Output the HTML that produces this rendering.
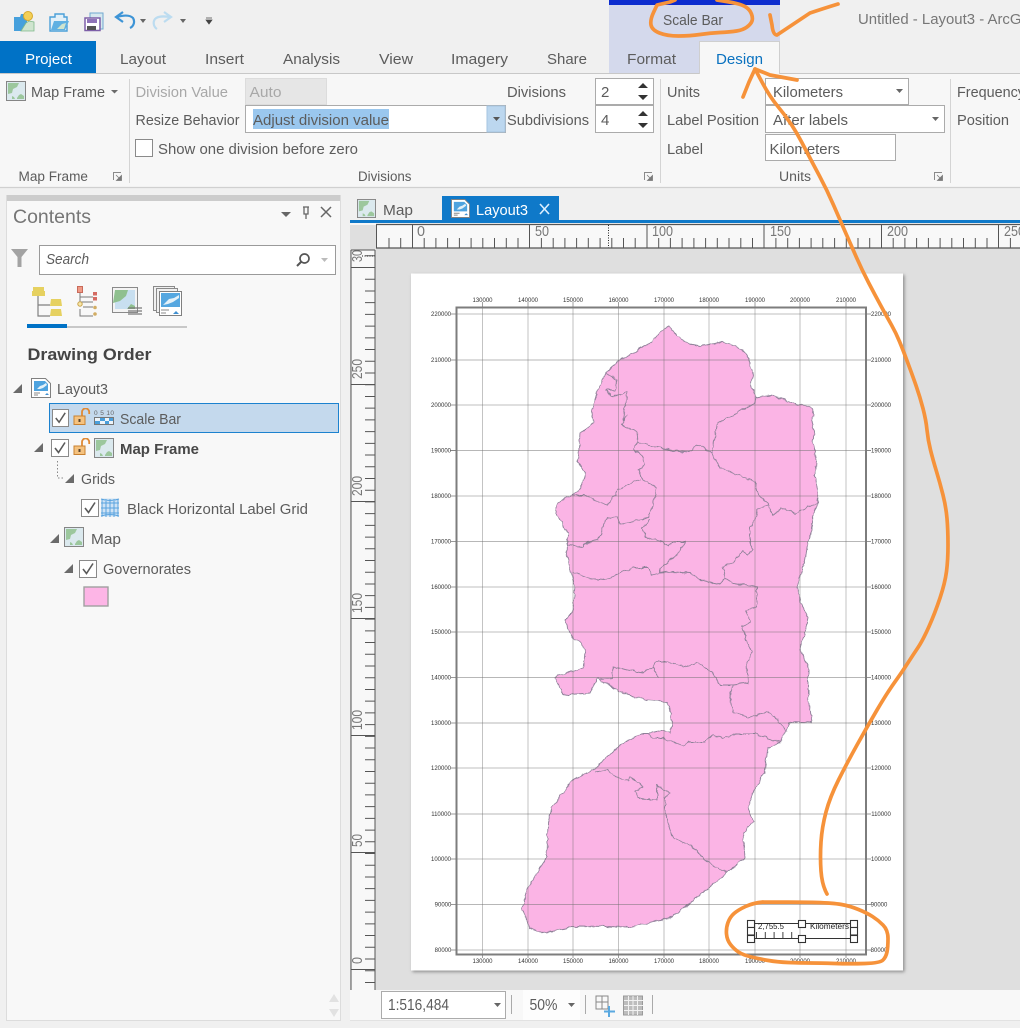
<!DOCTYPE html>
<html lang="en"><head><meta charset="utf-8"><title>Untitled - Layout3 - ArcGIS Pro</title>
<style>
html,body{margin:0;padding:0;background:#f0f0f0;overflow:hidden}
svg{display:block;filter:blur(.3px)}
text{font-family:"Liberation Sans",sans-serif;font-size:15px;fill:#5c5c5c}
.d{fill:#a8a8a8}
.g{font-size:13.5px}
.t{font-size:6px;fill:#333;text-anchor:middle}
.r{font-size:14.5px;fill:#777}
.box{fill:#fff;stroke:#ababab;stroke-width:1}
.sep{stroke:#d4d4d4;stroke-width:1}
.chk{fill:#fff;stroke:#8a8a8a;stroke-width:1}
.tick{fill:none;stroke:#555;stroke-width:1.6}
.o{fill:none;stroke:#f6923a;stroke-width:3.7;stroke-linecap:round;stroke-linejoin:round}
.tri{fill:#6b6b6b}
</style></head><body>
<svg xmlns="http://www.w3.org/2000/svg" width="1020" height="1028" viewBox="0 0 1020 1028">
<defs>
<symbol id="mapi" viewBox="0 0 20 20"><rect x=".5" y=".5" width="19" height="19" fill="#dbe9ee" stroke="#858585"/><path d="M2 2h11l-2 4-4 2-1 4-4 1z" fill="#9cc79d"/><path d="M11 17l2-3 2-1 3 2v3h-7zM6 18v-3l2 1 1 2z" fill="#9cc79d"/></symbol>
<symbol id="layi" viewBox="0 0 20 20"><path d="M.5.5h14l5 5v14H.5z" fill="#fff" stroke="#808080"/><path d="M3 3h11l3 3v7H3z" fill="#4ea3df"/><path d="M6 11l3-3 3-1 3-2 1 2-4 3-3 1z" fill="#e4f1f8"/><path d="M3 15h6M3 17h4" stroke="#888" stroke-width="1"/><path d="M14 17l2-2 2 2z" fill="#3f8fd0"/></symbol>
<symbol id="lock" viewBox="0 0 18 18"><path d="M9 8V4a3.6 3.6 0 0 1 7.200 0v2" fill="none" stroke="#e08a35" stroke-width="1.800"/><rect x="1" y="8" width="11" height="8.500" fill="#f5c27f" stroke="#c9812f"/><rect x="5.500" y="11" width="2" height="3" fill="#5b4630"/></symbol>
<symbol id="chkm" viewBox="0 0 18 18"><path d="M4 9l3.500 4.500L14 3.500" fill="none" stroke="#5a5a5a" stroke-width="1.600"/></symbol>
<symbol id="lnc" viewBox="0 0 9 9"><path d="M.5 8V.5H8" fill="none" stroke="#8a8a8a"/><path d="M3 3l3 3M8.500 3.500v5h-5z" fill="#7a7a7a" stroke="#7a7a7a" stroke-width=".8"/></symbol>
<filter id="sh" x="-5%" y="-5%" width="110%" height="110%"><feDropShadow dx="1.500" dy="1.500" stdDeviation="1.500" flood-color="#777" flood-opacity=".8"/></filter>
<filter id="wig" x="-3%" y="-3%" width="106%" height="106%"><feTurbulence type="fractalNoise" baseFrequency=".16" numOctaves="2" seed="4"/><feDisplacementMap in="SourceGraphic" scale="4" xChannelSelector="R" yChannelSelector="G"/></filter>
</defs>

<rect width="1020" height="1028" fill="#f0f0f0"/>

<!-- Title / quick access -->
<rect x="609" y="0" width="171" height="73" fill="#d4d9ec"/>
<rect x="609" y="0" width="171" height="5" fill="#0c2ccf"/>
<g>
<path d="M14 17h6l1-3h6v17H14z" fill="#46a0dc"/><path d="M21 31l5-8 3-2 5 1v9z" fill="#cfe4cf" stroke="#7fb98a" stroke-width=".8"/><circle cx="28" cy="16" r="4.500" fill="#f3cf57" stroke="#d7a92c"/>
<path d="M50 17h5v-3h9v3h3v14H50z" fill="#e3f0f8" stroke="#4a9fd8" stroke-width="1.400"/><path d="M51 30l3-9h15l-4 9z" fill="#5fb0e2"/><path d="M57 29l5-5 4-1-2 6z" fill="#cfe4cf"/>
<path d="M90 17V13h13v16h-6z" fill="#d6e8ef" stroke="#6fa9cf" stroke-width="1"/><path d="M85 18h15v12.500H85z" fill="#fff" stroke="#7d5fa8" stroke-width="1.500"/><rect x="87" y="19" width="10" height="4" fill="#8f74b8"/><rect x="87" y="26" width="9" height="4" fill="#555"/>
<path d="M130 28a7 7 0 0 0 3-10c-3-3-9-3-16-1" fill="none" stroke="#3d94d6" stroke-width="2.200"/><path d="M123 12l-7 5 7 5" fill="none" stroke="#3d94d6" stroke-width="2.200"/>
<path d="M157 29a7 7 0 0 1-2-10c3-3 8-3 15-2" fill="none" stroke="#bcdcf0" stroke-width="2.200"/><path d="M164 12l7 5-7 5" fill="none" stroke="#bcdcf0" stroke-width="2.200"/>
<path d="M140 19h6l-3 4zM180 19h6l-3 4z" fill="#666"/><path d="M206 18h6M206 20h6l-3 4z" fill="#444" stroke="#444" stroke-width=".7"/>
</g>
<text x="858" y="24" textLength="205" lengthAdjust="spacingAndGlyphs" style="font-size:14.500px;fill:#777">Untitled - Layout3 - ArcGIS Pro</text>
<text x="663" y="25" textLength="60" lengthAdjust="spacingAndGlyphs" fill="#666">Scale Bar</text>

<!-- Ribbon -->
<rect x="0" y="73" width="1020" height="114" fill="#f7f7f7"/>
<path d="M0 73.500H1020" stroke="#c8c8c8"/>
<path d="M0 187.500H1020" stroke="#d0d0d0" stroke-width="1.200"/>
<rect x="0" y="41" width="96" height="32" fill="#0072c6"/>
<path d="M699.500 74V41.500H779.500V74" fill="#f7f7f7" stroke="#cfcfcf"/>
<rect x="700" y="72" width="79" height="3" fill="#f7f7f7"/>
<text x="25" y="64" textLength="47" lengthAdjust="spacingAndGlyphs" style="fill:#fff">Project</text>
<text x="120" y="64" textLength="46" lengthAdjust="spacingAndGlyphs">Layout</text>
<text x="205" y="64" textLength="39" lengthAdjust="spacingAndGlyphs">Insert</text>
<text x="283" y="64" textLength="57" lengthAdjust="spacingAndGlyphs">Analysis</text>
<text x="379" y="64" textLength="34" lengthAdjust="spacingAndGlyphs">View</text>
<text x="451" y="64" textLength="57" lengthAdjust="spacingAndGlyphs">Imagery</text>
<text x="547" y="64" textLength="40" lengthAdjust="spacingAndGlyphs">Share</text>
<text x="627" y="64" textLength="49" lengthAdjust="spacingAndGlyphs">Format</text>
<text x="716" y="64" textLength="47" lengthAdjust="spacingAndGlyphs" style="fill:#0a72c0">Design</text>

<use href="#mapi" x="6" y="81" width="20" height="20"/>
<text x="31" y="97" textLength="74" lengthAdjust="spacingAndGlyphs">Map Frame</text>
<path d="M111 90h7l-3.500 3.500z" class="tri"/>
<path d="M129.500 79V183M660.500 79V183M950.500 79V183" class="sep"/>
<text x="135.500" y="97" textLength="92.500" lengthAdjust="spacingAndGlyphs" class="d">Division Value</text>
<rect x="245.500" y="78.500" width="81" height="26" fill="#e6e6e6" stroke="#dcdcdc"/>
<text x="249.500" y="97" textLength="32" lengthAdjust="spacingAndGlyphs" class="d">Auto</text>
<text x="135.500" y="125" textLength="104" lengthAdjust="spacingAndGlyphs">Resize Behavior</text>
<rect x="245.500" y="105.500" width="260" height="27" class="box"/>
<rect x="253" y="109" width="136" height="20" fill="#9ac7ee"/>
<rect x="487" y="106" width="18" height="26" fill="#bcd7ef" stroke="#a6c4e0"/>
<path d="M493 117h7l-3.500 4z" fill="#555"/>
<text x="253" y="125" textLength="136" lengthAdjust="spacingAndGlyphs" fill="#444">Adjust division value</text>
<rect x="135.500" y="139.500" width="17" height="17" class="chk"/>
<text x="158" y="154" textLength="200" lengthAdjust="spacingAndGlyphs">Show one division before zero</text>
<text x="18.500" y="181" textLength="69.500" lengthAdjust="spacingAndGlyphs" class="g">Map Frame</text>
<use href="#lnc" x="113" y="172" width="9" height="9"/>
<text x="358" y="181" textLength="53.500" lengthAdjust="spacingAndGlyphs" class="g">Divisions</text>
<text x="507" y="97" textLength="59" lengthAdjust="spacingAndGlyphs">Divisions</text>
<text x="507" y="125" textLength="82" lengthAdjust="spacingAndGlyphs">Subdivisions</text>
<rect x="595.500" y="78.500" width="58" height="26" class="box"/>
<rect x="595.500" y="105.500" width="58" height="27" class="box"/>
<text x="601" y="97">2</text><text x="601" y="125">4</text>
<path d="M638 88l5-5 5 5zM638 95h10l-5 5zM638 116l5-5 5 5zM638 123h10l-5 5z" fill="#333"/>
<use href="#lnc" x="644" y="172" width="9" height="9"/>
<text x="667" y="97" textLength="33" lengthAdjust="spacingAndGlyphs">Units</text>
<text x="667" y="125" textLength="92" lengthAdjust="spacingAndGlyphs">Label Position</text>
<text x="667" y="154" textLength="36" lengthAdjust="spacingAndGlyphs">Label</text>
<rect x="765.500" y="78.500" width="143" height="26" class="box"/>
<rect x="765.500" y="105.500" width="179" height="27" class="box"/>
<rect x="765.500" y="134.500" width="130" height="26" class="box"/>
<text x="773" y="97" textLength="70" lengthAdjust="spacingAndGlyphs">Kilometers</text>
<text x="773" y="125" textLength="75" lengthAdjust="spacingAndGlyphs">After labels</text>
<text x="769.500" y="154" textLength="70.500" lengthAdjust="spacingAndGlyphs">Kilometers</text>
<path d="M896 89h7l-3.500 4zM932 117h7l-3.500 4z" fill="#666"/>
<text x="779" y="181" textLength="32" lengthAdjust="spacingAndGlyphs" class="g">Units</text>
<use href="#lnc" x="934" y="172" width="9" height="9"/>
<text x="957" y="97" textLength="68" lengthAdjust="spacingAndGlyphs">Frequency</text>
<text x="957" y="125" textLength="52" lengthAdjust="spacingAndGlyphs">Position</text>

<!-- Contents pane -->
<rect x="6.500" y="195.500" width="334" height="825" fill="#f8f8f8" stroke="#dcdcdc"/>
<rect x="7" y="195" width="333" height="6" fill="#cccccc"/>
<text x="13" y="223" textLength="78" lengthAdjust="spacingAndGlyphs" style="font-size:19.500px;fill:#767676">Contents</text>
<path d="M281 212h10l-5 5z" fill="#666"/>
<path d="M303 207h6M304 207v7h4v-7M306 214v5" fill="none" stroke="#666" stroke-width="1.300"/>
<path d="M321 207l10 10M331 207l-10 10" stroke="#666" stroke-width="1.500"/>
<path d="M11 249h17l-6.500 8v10h-4v-10z" fill="#a3a3a3"/>
<rect x="39.500" y="245.500" width="296" height="29" class="box" style="stroke:#9a9a9a"/>
<text x="46" y="264" textLength="43" lengthAdjust="spacingAndGlyphs" style="font-style:italic;font-size:14.500px">Search</text>
<circle cx="304.500" cy="258.500" r="4.500" fill="none" stroke="#555" stroke-width="1.700"/><path d="M301 262l-4 4" stroke="#555" stroke-width="2"/>
<path d="M321 258h7l-3.500 4z" fill="#bbb"/>
<g>
<path d="M33 287h11v4h1v5H32v-5h1z" fill="#e6d160"/><path d="M38 296v20h12M38 305h12" fill="none" stroke="#808080" stroke-width="1.200"/>
<path d="M51 299h10l1 7H50zM51 309h10l1 7H50z" fill="#e6d160"/>
<rect x="77.500" y="286.500" width="5" height="6" fill="#ef9a86" stroke="#c86a5a"/><path d="M80 293v9h13M80 297h13M80 309v7h13M83 307h10" fill="none" stroke="#7a7a7a"/>
<rect x="93" y="292" width="4" height="3.500" fill="#d56b63"/><rect x="93" y="297" width="4" height="3.500" fill="#d56b63"/><circle cx="95" cy="307.500" r="1.800" fill="#d2ad64"/><circle cx="95" cy="314" r="1.800" fill="#d2ad64"/><circle cx="80" cy="304" r="2.200" fill="#f8e7a8" stroke="#c8a34c"/>
<rect x="112.500" y="287.500" width="25" height="25" fill="#f4f4f4" stroke="#8a8a8a"/><rect x="115" y="290" width="20" height="19" fill="#c8dff0"/><path d="M115 290h13l-2 6-6 5-7 2z" fill="#8fc08f"/><path d="M127 309l4-5 4 2v3z" fill="#8fc08f"/><path d="M128 308h14M128 311h14M128 314h14" stroke="#777" stroke-width="1.200"/>
<rect x="153.500" y="286.500" width="21" height="24" fill="#f0f0f0" stroke="#8a8a8a"/><rect x="156.500" y="288.500" width="21" height="24" fill="#f0f0f0" stroke="#8a8a8a"/><rect x="159.500" y="291.500" width="22" height="24" fill="#fff" stroke="#808080"/><rect x="161" y="293" width="19" height="14" fill="#55a7e0"/><path d="M163 305l6-6 5-1 5-3v3l-6 4-5 2z" fill="#e4f1f8"/><path d="M161 310h8M161 313h5" stroke="#888"/><path d="M173 314l3-3 3 3z" fill="#3f8fd0"/>
</g>
<rect x="27" y="326" width="160" height="2" fill="#c8c8c8"/>
<rect x="27" y="324" width="40" height="4" fill="#0072c6"/>
<text x="27.500" y="360" textLength="124" lengthAdjust="spacingAndGlyphs" style="font-size:17px;font-weight:bold;fill:#444">Drawing Order</text>

<path d="M22 384v9h-9z" class="tri"/>
<use href="#layi" x="31" y="378" width="20" height="20"/>
<text x="57" y="394" textLength="51" lengthAdjust="spacingAndGlyphs">Layout3</text>

<rect x="49.500" y="403.500" width="289" height="29" fill="#c4d9ed" stroke="#1c82cf"/>
<rect x="52.500" y="409.500" width="16" height="17" class="chk"/><use href="#chkm" x="52" y="409" width="17" height="18"/>
<use href="#lock" x="73" y="408" width="18" height="18"/>
<text x="94" y="415" style="font-size:6.500px;fill:#666" textLength="20">0 5 10</text>
<rect x="94.500" y="417.500" width="19" height="7" fill="#eef4fa" stroke="#777"/><path d="M95 421h5v3h-5zM105 421h4v3h-4zM100 418h5v3h-5zM109 418h4v3h-4z" fill="#4a9fdc"/>
<text x="120" y="424" textLength="61" lengthAdjust="spacingAndGlyphs">Scale Bar</text>

<path d="M43 443v9h-9z" class="tri"/>
<rect x="51.500" y="439.500" width="17" height="17" class="chk"/><use href="#chkm" x="51" y="439" width="18" height="18"/>
<use href="#lock" x="73" y="438" width="18" height="18"/>
<use href="#mapi" x="94" y="438" width="20" height="20"/>
<text x="120" y="454" textLength="79" lengthAdjust="spacingAndGlyphs" style="font-weight:bold;fill:#484848">Map Frame</text>

<path d="M57.500 461V478H65" fill="none" stroke="#888" stroke-dasharray="1.500 2"/>
<path d="M74 474v9h-9z" class="tri"/>
<text x="81" y="484" textLength="34" lengthAdjust="spacingAndGlyphs">Grids</text>

<rect x="81.500" y="499.500" width="17" height="17" class="chk"/><use href="#chkm" x="81" y="499" width="18" height="18"/>
<rect x="101.500" y="498.500" width="17" height="18" fill="#cfe3f5"/><path d="M102 499v18M106 499v18M110 499v18M114 499v18M118 499v18M101 503h18M101 508h18M101 513h18M101 499c6 2 12 2 18 0M101 516c6-2 12-2 18 0" fill="none" stroke="#5aa3de" stroke-width="1"/>
<text x="127" y="514" textLength="181" lengthAdjust="spacingAndGlyphs">Black Horizontal Label Grid</text>

<path d="M59 534v9h-9z" class="tri"/>
<use href="#mapi" x="64" y="527" width="20" height="20"/>
<text x="91" y="544" textLength="30" lengthAdjust="spacingAndGlyphs">Map</text>

<path d="M73 564v9h-9z" class="tri"/>
<rect x="79.500" y="560.500" width="17" height="17" class="chk"/><use href="#chkm" x="79" y="560" width="18" height="18"/>
<text x="103" y="574" textLength="88" lengthAdjust="spacingAndGlyphs">Governorates</text>
<rect x="84" y="587" width="24" height="19" fill="#fdb5e6" stroke="#a0a0a0" stroke-width="1.400"/>
<path d="M329 1002l5-8 5 8zM329 1009l5 8 5-8z" fill="#e2e2e2"/>

<!-- Document tabs -->
<use href="#mapi" x="357" y="199" width="19" height="19"/>
<text x="383" y="215" textLength="30" lengthAdjust="spacingAndGlyphs" fill="#555">Map</text>
<rect x="442" y="196" width="117" height="26" fill="#0f79c9"/>
<use href="#layi" x="451" y="199" width="19" height="19"/>
<text x="476" y="215" textLength="52" lengthAdjust="spacingAndGlyphs" style="fill:#fff">Layout3</text>
<path d="M540 204l9 10M549 204l-9 10" stroke="#dcefff" stroke-width="1.600"/>
<rect x="350" y="220" width="670" height="3" fill="#0f79c9"/>
<rect x="350" y="223" width="670" height="2" fill="#f6f6f6"/>

<!-- Canvas + rulers -->
<rect x="350" y="225" width="670" height="765" fill="#dfdfdf"/>
<rect x="376" y="225" width="644" height="23" fill="#f8f8f8"/>
<path d="M376 224.500H1020M376 248H1020" stroke="#555" stroke-width="1.200"/>
<path fill="none" stroke="#555" stroke-width="1" d="M389 238v10M400.700 238v10M424.200 238v10M435.900 238v10M447.600 238v10M459.400 238v10M471.100 238v10M482.800 238v10M494.500 238v10M506.300 238v10M518 238v10M541.400 238v10M553.200 238v10M564.900 238v10M576.600 238v10M588.300 238v10M600.100 238v10M611.800 238v10M623.500 238v10M635.200 238v10M658.700 238v10M670.400 238v10M682.100 238v10M693.900 238v10M705.600 238v10M717.300 238v10M729 238v10M740.800 238v10M752.500 238v10M775.900 238v10M787.700 238v10M799.400 238v10M811.100 238v10M822.800 238v10M834.600 238v10M846.300 238v10M858 238v10M869.700 238v10M893.200 238v10M904.900 238v10M916.600 238v10M928.400 238v10M940.100 238v10M951.800 238v10M963.500 238v10M975.300 238v10M987 238v10M1010.400 238v10"/>
<path d="M376.500 225V248M412.500 225V248M529.500 225V248M647 225V248M764 225V248M881.500 225V248M998.500 225V248" stroke="#555"/>
<path d="M608.500 225V248" stroke="#222" stroke-dasharray="1 1.500"/>
<text x="417" y="236" class="r" textLength="8" lengthAdjust="spacingAndGlyphs">0</text>
<text x="535" y="236" class="r" textLength="14" lengthAdjust="spacingAndGlyphs">50</text>
<text x="652" y="236" class="r" textLength="21" lengthAdjust="spacingAndGlyphs">100</text>
<text x="770" y="236" class="r" textLength="21" lengthAdjust="spacingAndGlyphs">150</text>
<text x="887" y="236" class="r" textLength="21" lengthAdjust="spacingAndGlyphs">200</text>
<text x="1004" y="236" class="r" textLength="21" lengthAdjust="spacingAndGlyphs">250</text>

<rect x="351" y="250" width="24.500" height="740" fill="#f8f8f8"/>
<path d="M351 250H375M351 250V990M375 250V990" stroke="#555" fill="none" stroke-width="1"/>
<line x1="370" y1="255.300" x2="370" y2="990" stroke="#555" stroke-width="10" stroke-dasharray="1 10.720"/>
<path d="M351 267.500H375M351 384.500H375M351 501.500H375M351 618.500H375M351 735.500H375M351 852.500H375M351 969.500H375" stroke="#555"/>
<path d="M362 256H375" stroke="#222" stroke-dasharray="1 1.500"/>
<text transform="translate(362 262) rotate(-90)" class="r" textLength="12" lengthAdjust="spacingAndGlyphs">30</text>
<text transform="translate(362 379) rotate(-90)" class="r" textLength="20" lengthAdjust="spacingAndGlyphs">250</text>
<text transform="translate(362 496) rotate(-90)" class="r" textLength="20" lengthAdjust="spacingAndGlyphs">200</text>
<text transform="translate(362 613) rotate(-90)" class="r" textLength="20" lengthAdjust="spacingAndGlyphs">150</text>
<text transform="translate(362 730) rotate(-90)" class="r" textLength="20" lengthAdjust="spacingAndGlyphs">100</text>
<text transform="translate(362 847) rotate(-90)" class="r" textLength="13" lengthAdjust="spacingAndGlyphs">50</text>
<text transform="translate(362 964) rotate(-90)" class="r" textLength="7" lengthAdjust="spacingAndGlyphs">0</text>

<!-- Page -->
<rect x="411" y="273.500" width="492" height="697" fill="#fff" filter="url(#sh)"/>

<!-- Map polygon -->
<g filter="url(#wig)">
<path fill="#fbb4e5" stroke="#8f8199" stroke-width=".9" stroke-linejoin="round" d="M669 326L678 337 690 344 700 346 712 344 722 342 735 346 743 350 749 360 753 373 751 387 756 397 770 395 782 399 793 403 803 405 813 408 812 420 814 431 813 443 816 460 815 477 818 497 817 507 812 520 812 530 808 543 805 560 797 587 800 600 808 618 805 633 800 650 808 667 808 693 812 723 790 722 785 733 780 743 768 748 765 770 755 790 748 807 753 822 743 833 745 858 727 873 673 917 630 927 580 926 540 933 530 928 522 908 528 887 547 857 548 823 552 807 573 780 593 770 617 748 628 740 642 733 650 733 663 730 670 733 672 722 668 702 647 700 620 692 597 678 590 693 563 695 555 677 583 668 585 653 582 643 572 638 565 620 572 613 575 587 567 555 568 533 556 513 557 503 580 490 585 473 578 462 580 433 593 423 592 412 598 390 606 373 617 362 633 353 652 342 660 332z"/>
<g fill="none" stroke="#8f8199" stroke-width=".9" stroke-linejoin="round">
<path d="M606 373L617 380 615 390 605 390 612 397 627 392 625 407 623 420 627 415 621 425 637 432 638 442 633 448 643 457 645 465 638 470 643 480 657 488 652 507 648 518 620 524 617 517 607 518 598 540 588 542 583 547 568 545"/>
<path d="M638 442L657 447 670 450 690 452 697 445 712 453 720 468 733 473 755 482 758 495 768 503 772 515 782 508 795 513 817 503"/>
<path d="M712 453L717 423 733 415 755 403 756 397"/>
<path d="M768 505L757 510 755 520 750 527 750 545 753 550 748 554 742 550 733 563 723 568 725 578 733 583 757 587 757 607 746 610 750 622 742 627 747 642 752 653 747 663 748 683 733 685 720 685 712 672 697 663 683 667 670 662 655 662 653 667 659 678"/>
<path d="M653 667L643 673 613 667 612 678 600 679"/>
<path d="M733 685L730 695 733 712 748 718 768 712 778 720 787 732"/>
<path d="M573 572L588 578 603 580 620 573 633 568 648 568 652 575 660 573 660 568 677 555 685 542 672 542 668 547 663 542 645 537 642 528 650 519"/>
<path d="M660 573L673 572 690 573 700 580 720 584 725 578"/>
<path d="M572 495L583 495 607 505 615 495 617 490 640 479"/>
<path d="M780 742L755 734 737 734 723 738 713 735 705 742 688 742 683 746 663 738 653 738 649 734"/>
<path d="M595 772L607 770 617 777 628 781 630 777 643 787 635 791 640 799 657 800 657 785 670 793 665 798 665 813 673 838 690 845 707 862 727 873"/>
</g>
</g>

<!-- Grid lines -->
<g fill="none" stroke="#6f6f6f">
<path stroke-opacity=".42" d="M482.500 307V954M528 307V954M618.500 307V954M709 307V954M755 307V954M846 307V954"/>
<path stroke-opacity=".22" stroke-width="2" d="M573 307V954M664 307V954M800 307V954"/>
<path stroke-opacity=".5" d="M456 360H866M450 450.500H871M456 541.500H866M456 677.500H866M456 723H866M456 814H866M456 904.500H866"/>
<path stroke-opacity=".22" stroke-width="2" d="M456 314H866M456 405H866M456 496H866M456 587H866M456 632H866M456 768H866M456 859H866M456 950H866"/>
</g>
<rect x="456.500" y="307.500" width="409.500" height="647" fill="none" stroke="#7d7d7d" stroke-width="2"/>
<path d="M482.500 302V307M528 302V307M573 302V307M618.500 302V307M664 302V307M709 302V307M755 302V307M800 302V307M846 302V307M482.500 954V958M528 954V958M573 954V958M618.500 954V958M664 954V958M709 954V958M755 954V958M800 954V958M846 954V958" stroke="#777" stroke-width=".7"/>
<path d="M451 314H456M451 360H456M451 405H456M451 450.500H456M451 496H456M451 541.500H456M451 587H456M451 632H456M451 677.500H456M451 723H456M451 768H456M451 814H456M451 859H456M451 904.500H456M451 950H456M866 314H871M866 360H871M866 405H871M866 450.500H871M866 496H871M866 541.500H871M866 587H871M866 632H871M866 677.500H871M866 723H871M866 768H871M866 814H871M866 859H871M866 904.500H871M866 950H871" stroke="#777" stroke-width=".7"/>
<g class="lab">
<text class="t" x="482.500" y="302">130000</text><text class="t" x="528" y="302">140000</text><text class="t" x="573" y="302">150000</text><text class="t" x="618.500" y="302">160000</text><text class="t" x="664" y="302">170000</text><text class="t" x="709" y="302">180000</text><text class="t" x="755" y="302">190000</text><text class="t" x="800" y="302">200000</text><text class="t" x="846" y="302">210000</text>
<text class="t" x="482.500" y="963">130000</text><text class="t" x="528" y="963">140000</text><text class="t" x="573" y="963">150000</text><text class="t" x="618.500" y="963">160000</text><text class="t" x="664" y="963">170000</text><text class="t" x="709" y="963">180000</text><text class="t" x="755" y="963">190000</text><text class="t" x="800" y="963">200000</text><text class="t" x="846" y="963">210000</text>
<text class="t" x="441" y="316">220000</text><text class="t" x="441" y="362">210000</text><text class="t" x="441" y="407">200000</text><text class="t" x="441" y="452.500">190000</text><text class="t" x="441" y="498">180000</text><text class="t" x="441" y="543.500">170000</text><text class="t" x="441" y="589">160000</text><text class="t" x="441" y="634">150000</text><text class="t" x="441" y="679.500">140000</text><text class="t" x="441" y="725">130000</text><text class="t" x="441" y="770">120000</text><text class="t" x="441" y="816">110000</text><text class="t" x="441" y="861">100000</text><text class="t" x="443" y="906.500">90000</text><text class="t" x="443" y="952">80000</text>
<text class="t" x="881" y="316">220000</text><text class="t" x="881" y="362">210000</text><text class="t" x="881" y="407">200000</text><text class="t" x="881" y="452.500">190000</text><text class="t" x="881" y="498">180000</text><text class="t" x="881" y="543.500">170000</text><text class="t" x="881" y="589">160000</text><text class="t" x="881" y="634">150000</text><text class="t" x="881" y="679.500">140000</text><text class="t" x="881" y="725">130000</text><text class="t" x="881" y="770">120000</text><text class="t" x="881" y="816">110000</text><text class="t" x="881" y="861">100000</text><text class="t" x="879" y="906.500">90000</text><text class="t" x="879" y="952">80000</text>
</g>

<!-- Scale bar element -->
<path d="M754 923.500H850M754 938.500H850" stroke="#333" stroke-width="1"/>
<line x1="756" y1="935" x2="800" y2="935" stroke="#444" stroke-width="6" stroke-dasharray="1 7.800"/>
<text x="758" y="929" textLength="26" lengthAdjust="spacingAndGlyphs" style="font-size:8.500px;fill:#222">2,755.5</text>
<text x="810" y="929" textLength="39" lengthAdjust="spacingAndGlyphs" style="font-size:8.500px;fill:#222">Kilometers</text>
<g fill="#fff" stroke="#333" stroke-width="1.100">
<rect x="747.500" y="920.500" width="7" height="7"/><rect x="747.500" y="927.500" width="7" height="7.500"/><rect x="747.500" y="935.500" width="7" height="7"/>
<rect x="798.500" y="920.500" width="7" height="7"/><rect x="798.500" y="935.500" width="7" height="7"/>
<rect x="850.500" y="920.500" width="7" height="7"/><rect x="850.500" y="927.500" width="7" height="7.500"/><rect x="850.500" y="935.500" width="7" height="7"/>
</g>

<!-- Status bar -->
<rect x="350" y="990" width="670" height="30" fill="#f8f8f8"/>
<path d="M350 1020.500H1020" stroke="#e2e2e2"/>
<rect x="381.500" y="991.500" width="124" height="27" class="box"/>
<text x="388" y="1010" textLength="61" lengthAdjust="spacingAndGlyphs" fill="#555" style="font-size:16px">1:516,484</text>
<path d="M494 1003h7l-3.500 4z" fill="#666"/>
<path d="M511.500 995V1014M585.500 995V1014M652.500 995V1014" stroke="#aaa"/>
<rect x="523" y="990" width="57" height="30" fill="#fdfdfd"/>
<path d="M568 1003h7l-3.500 4z" fill="#666"/>
<text x="529.500" y="1010" textLength="28" lengthAdjust="spacingAndGlyphs" fill="#555" style="font-size:16px">50%</text>
<path d="M596 996h12v13h-12zM596 1002h12M602 996v13" fill="none" stroke="#888"/>
<path d="M609 1006v11M604 1011.500h11" stroke="#5aa9e0" stroke-width="2"/>
<rect x="623.500" y="996" width="19" height="19" fill="#bdbdbd" stroke="#9a9a9a"/><path d="M628.500 996v19M633 996v19M637.500 996v19M624 1000.500h19M624 1005.500h19M624 1010.500h19" stroke="#f2f2f2"/>

<!-- Orange annotations -->
<path class="o" d="M675 0L670 2 657 5 653.500 12.500Q650 20 651 25Q652 30 659.500 33Q667 36 678.500 36Q690 36 700 34.500Q710 33 720 32.500Q730 32 736.500 31Q743 30 747 27Q751 24 752 21Q753 18 751.500 14Q750 10 746.500 7.500Q743 5 736.500 3.500Q730 2 723.500 1L717 0"/>
<path class="o" d="M838 4Q825 8 810 13Q795 23 777 35Q773 35 772 25L770 15"/>
<polyline class="o" points="743,97 749,82 755,69 770,75 797,80"/>
<path class="o" d="M755 69L762.500 83Q770 97 777.500 106Q785 115 791 124Q797 133 804.500 147.500Q812 162 819.500 176Q827 190 833.500 205Q840 220 845.500 232.500Q851 245 856.500 257.500Q862 270 868.500 282.500Q875 295 881 306Q887 317 891.500 325Q896 333 899.500 341.500Q903 350 907.500 362Q912 374 916 385.500Q920 397 923 408.500Q926 420 927 430Q928 440 930.500 450Q933 460 936.500 471.500Q940 483 943 495Q946 507 947 518.500Q948 530 948 545Q948 560 946.500 571.500Q945 583 940 598Q935 613 929 626.500Q923 640 918 647.500Q913 655 907.500 663.500Q902 672 894.500 682.500Q887 693 877 710Q867 727 857 745Q847 763 838.500 780Q830 797 826 812Q822 827 821 842Q820 857 821 871Q822 885 827 894"/>
<path class="o" d="M763 902Q753 903 745.500 906.500Q738 910 734 913.500Q730 917 728 922.500Q726 928 726.500 934Q727 940 730.500 944.500Q734 949 738.500 952Q743 955 751.500 957Q760 959 768.500 960.500Q777 962 788.500 962.500Q800 963 810 963Q820 963 835 963.500Q850 964 865 963.500Q880 963 883 960Q886 957 887 952Q888 947 888 938.500Q888 930 883 925Q878 920 872.500 916.500Q867 913 858.500 909.500Q850 906 841.500 904.500Q833 903 816.500 902.500Q800 902 763 902"/>
</svg>
</body></html>
